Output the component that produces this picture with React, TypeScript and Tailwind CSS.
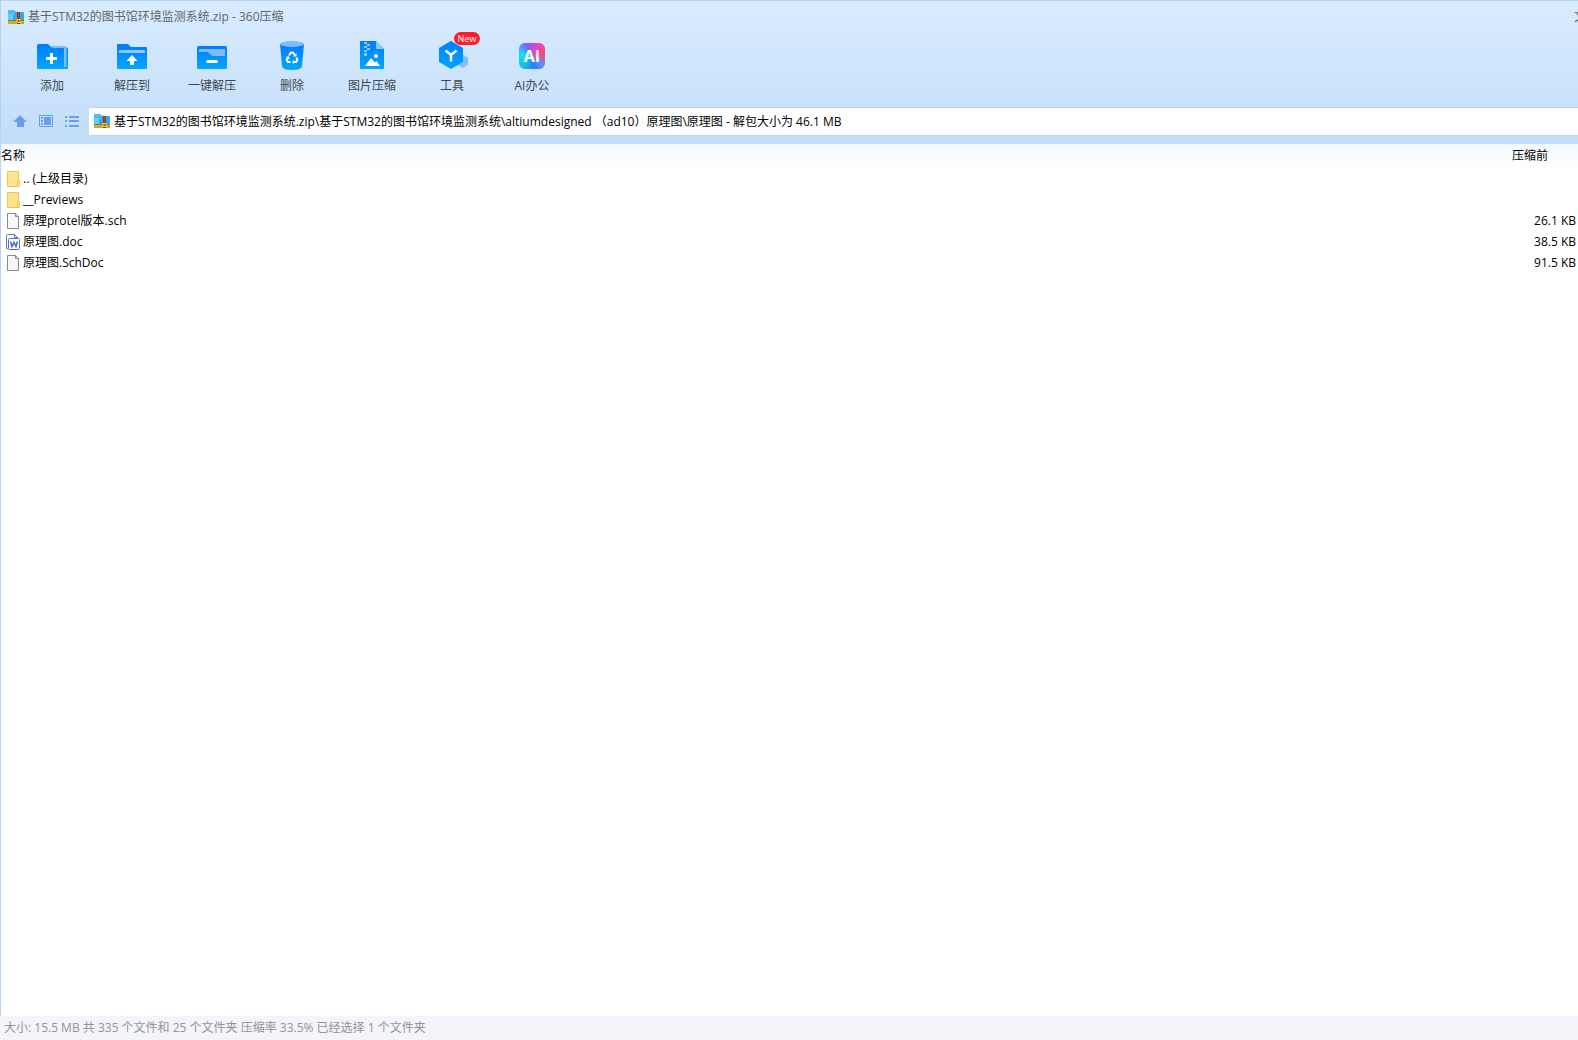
import type { ReactNode } from "react";

interface ToolButtonProps {
  label: string;
  icon: ReactNode;
  badge?: string;
}

interface FileRow {
  name: string;
  kind: "folder" | "file" | "doc";
  size?: string;
}

const files: FileRow[] = [
  { name: ".. (上级目录)", kind: "folder" },
  { name: "__Previews", kind: "folder" },
  { name: "原理protel版本.sch", kind: "file", size: "26.1 KB" },
  { name: "原理图.doc", kind: "doc", size: "38.5 KB" },
  { name: "原理图.SchDoc", kind: "file", size: "91.5 KB" },
];

const ZipIcon = () => (
  <svg width="16" height="16" viewBox="0 0 16 16" className="shrink-0" aria-hidden="true">
    <path d="M0 2q0-1 1-1h5l1.500 1.500H9V11H0Z" fill="#4cb8f5" />
    <path d="M7 3h8q1 0 1 1v7H0V6h6Z" fill="#3ba5ea" />
    <path d="M0 5h6l-1 2v4H0Z" fill="#62cbfa" />
    <path d="M0 11h16v1H0Z" fill="#4d9a3a" />
    <path d="M0 12h16v2H0Z" fill="#f79a1c" />
    <path d="M0 14h16v1H0Z" fill="#8cc63f" />
    <path d="M9 3h3v12H9Z" fill="#8a3f10" />
    <path d="M10 4h1v1h-1ZM10 6h1v1h-1ZM10 8h1v1h-1Z" fill="#b8702c" />
    <path d="M9 10.500h3v3H9Z" fill="#9a4a10" stroke="#ffd860" />
  </svg>
);

const Gradient = ({ id }: { id: string }) => (
  <linearGradient id={id} x1="0" y1="0" x2="0" y2="1">
    <stop offset="0" stopColor="#007bff" />
    <stop offset="1" stopColor="#00a8ff" />
  </linearGradient>
);

const AddIcon = () => (
  <svg width="32" height="32" viewBox="0 0 32 32">
    <Gradient id="add" />
    <path d="M1 5.500Q1 4 2.500 4H12l3 3h14q3 0 3 3v18q0 1-1 1H2q-1 0-1-1Z" fill="url(#add)" />
    <path d="M14 6h15q1.500 0 1.500 1.500V27H28V8H16Z" fill="#7ebeff" />
    <path d="M15.500 13v11M10 18.500h11" stroke="#fff" strokeWidth="3" />
  </svg>
);

const ExtractIcon = () => (
  <svg width="32" height="32" viewBox="0 0 32 32">
    <Gradient id="extract" />
    <path d="M1 5q0-1 1-1h10l3 3h15q1 0 1 1v20q0 1-1 1H2q-1 0-1-1Z" fill="url(#extract)" />
    <path d="M3 13v-2q0-1 1-1h24q1 0 1 1v2Z" fill="#8dc8ff" />
    <path d="M16 15l5.500 6H18v4h-4v-4h-3.500Z" fill="#fff" />
  </svg>
);

const OneKeyIcon = () => (
  <svg width="32" height="32" viewBox="0 0 32 32">
    <Gradient id="onekey" />
    <rect x="1" y="6" width="30" height="23" rx="1.500" fill="url(#onekey)" />
    <path d="M3 10q0-1 1-1h24q1 0 1 1v6H16l-4-4H3Z" fill="#7ebeff" />
    <path d="M11.500 21.500h9" stroke="#fff" strokeWidth="3" strokeLinecap="round" />
  </svg>
);

const DeleteIcon = () => (
  <svg width="32" height="32" viewBox="0 0 32 32">
    <Gradient id="delete" />
    <path d="M4 4h24l-2 22q-.3 4-10 4T6 26Z" fill="url(#delete)" />
    <ellipse cx="16" cy="4" rx="12" ry="3" fill="#7ebeff" />
    <g fill="none" stroke="#fff" strokeWidth="2">
      <path d="M13 15.500l1.800-2.700h2.400l1.600 2.500" />
      <path d="M20.200 17.500l1.200 2.200-1.300 2.300h-2.600" />
      <path d="M14.500 22h-2.600l-1.300-2.300 1.200-2.300" />
    </g>
    <path d="M20.500 13v3.500h-3.500ZM18 19.800v4.400L15.800 22ZM9.500 17l3.500-.8.800 3.500Z" fill="#fff" />
  </svg>
);

const ImageIcon = () => (
  <svg width="32" height="32" viewBox="0 0 32 32">
    <Gradient id="image" />
    <path d="M4 2q0-1 1-1h15l8 8v19q0 1-1 1H5q-1 0-1-1Z" fill="url(#image)" />
    <path d="M20 1l8 8h-7q-1 0-1-1Z" fill="#8dc8ff" />
    <path d="M8 2h3v2H8ZM11 4h3v2h-3ZM8 6h3v2H8ZM11 8h3v2h-3ZM8 10h3v2H8ZM8 13h3v3H8Z" fill="#8dc8ff" />
    <circle cx="20" cy="16" r="2" fill="#fff" />
    <path d="M9 26l6-8 4 4.500 1.500-1.500L24 26Z" fill="#fff" />
  </svg>
);

const ToolsIcon = () => (
  <svg width="32" height="32" viewBox="0 0 32 32">
    <Gradient id="tools" />
    <path d="M27 15l5 2.500v7L27 28l-5-3Z" fill="#7ebeff" />
    <path d="M15 1l12 7v14l-12 7-12-7V8Z" fill="url(#tools)" />
    <path d="M9.500 10.500L15 15l5.500-4.500M15 15v6.500" fill="none" stroke="#fff" strokeWidth="2.500" />
  </svg>
);

const AiIcon = () => (
  <span className="flex h-[26px] w-[26px] items-center justify-center rounded-md bg-[conic-gradient(from_20deg,#e83fd0,#ff4a6a_60deg,#5a8cff_110deg,#2a7bff_150deg,#18c8e8_210deg,#1cdff0_260deg,#6a6cff_310deg,#e83fd0)] text-base font-bold text-white">
    AI
  </span>
);

const ToolButton = ({ label, icon, badge }: ToolButtonProps) => (
  <button type="button" className="relative flex w-20 flex-col items-center text-[#3f4750]">
    <span className="flex h-8 items-center" aria-hidden="true">
      {icon}
    </span>
    <span className="mt-1 h-5 leading-5">{label}</span>
    {badge && (
      <span className="absolute -top-2 left-[42px] flex h-[13px] w-[26px] items-center justify-center rounded-full bg-[#fa1e2d] text-[9px] text-white">
        {badge}
      </span>
    )}
  </button>
);

const FileIcon = ({ kind }: { kind: FileRow["kind"] }) => {
  if (kind === "folder") {
    return (
      <svg width="16" height="16" viewBox="0 0 16 16" className="shrink-0" aria-hidden="true">
        <path d="M1.500.5h11v9h1v6h-12Z" fill="#ffe391" stroke="#eec750" />
        <path d="M11.500 15v-4.500q0-1 1-1t1 1V15" fill="#ffe391" stroke="#eec750" />
      </svg>
    );
  }
  if (kind === "doc") {
    return (
      <svg width="16" height="16" viewBox="0 0 16 16" className="shrink-0" aria-hidden="true">
        <path d="M.5 1.500q0-1 1-1h7l3 3v11H.5Z" fill="#f8f8f8" stroke="#7f7f7f" />
        <path d="M8.500.5v3h3" fill="none" stroke="#7f7f7f" />
        <rect x="2.500" y="4.500" width="11" height="11" rx="1" fill="#fff" stroke="#4b6df0" />
        <path d="M4.500 7.500l1.500 5 2-4 2 4 1.500-5" fill="none" stroke="#3c63ee" strokeWidth="1.500" />
      </svg>
    );
  }
  return (
    <svg width="16" height="16" viewBox="0 0 16 16" className="shrink-0" aria-hidden="true">
      <path d="M1.500.5h8l3 3v12h-11Z" fill="#f8f8f8" stroke="#8b8b8b" />
      <path d="M9.500.5v3h3" fill="none" stroke="#8b8b8b" />
    </svg>
  );
};

const AddressBar = () => (
  <div className="flex h-9 items-center pl-3">
    <div className="flex gap-[10px] pr-2 text-[#699fea]">
      <button type="button" aria-label="向上" className="h-4 w-4">
        <svg width="16" height="16" viewBox="0 0 16 16" fill="currentColor">
          <path d="M7 2l7 7h-3v5H4V9H0Z" />
        </svg>
      </button>
      <button type="button" aria-label="预览" className="h-4 w-4">
        <svg width="16" height="16" viewBox="0 0 16 16" fill="none" stroke="currentColor">
          <path d="M.5 2.500h13v11H.5Z" />
          <path d="M2 5h2M2 8h2M2 11h2" strokeWidth="2" />
          <path d="M5 4h7v8H5Z" fill="currentColor" stroke="none" />
        </svg>
      </button>
      <button type="button" aria-label="列表" className="h-4 w-4">
        <svg width="16" height="16" viewBox="0 0 16 16" stroke="currentColor" strokeWidth="2">
          <path d="M0 4h2M0 8h2M0 13h2M4 4h10M4 8h10M4 13h10" />
        </svg>
      </button>
    </div>
    <label className="flex h-[29px] flex-1 items-center gap-1 border-y border-[#b9d6f2] bg-white pl-[5px]">
      <ZipIcon />
      <input
        type="text"
        aria-label="路径"
        className="h-5 min-w-0 flex-1 text-black outline-none"
        defaultValue="基于STM32的图书馆环境监测系统.zip\基于STM32的图书馆环境监测系统\altiumdesigned （ad10）原理图\原理图 - 解包大小为 46.1 MB"
      />
    </label>
  </div>
);

const App = () => {
  return (
    <div className="flex min-h-screen flex-col bg-white font-['Open_Sans','Noto_Sans_CJK_SC',sans-serif] text-xs text-black">
      <header className="border-t border-l border-[#b4d3f2] bg-linear-to-b from-[#d9ecff] to-[#c2ddf8]">
        <div className="flex h-8 items-center justify-between pl-[7px] text-[#5f666e]">
          <h1 className="flex items-center gap-1">
            <ZipIcon />
            基于STM32的图书馆环境监测系统.zip - 360压缩
          </h1>
          <button type="button" className="w-1 overflow-hidden whitespace-nowrap">
            文件
          </button>
        </div>
        <nav className="flex h-[70px] pt-[7px] pl-[11px]">
          <ToolButton label="添加" icon={<AddIcon />} />
          <ToolButton label="解压到" icon={<ExtractIcon />} />
          <ToolButton label="一键解压" icon={<OneKeyIcon />} />
          <ToolButton label="删除" icon={<DeleteIcon />} />
          <ToolButton label="图片压缩" icon={<ImageIcon />} />
          <ToolButton label="工具" icon={<ToolsIcon />} badge="New" />
          <ToolButton label="AI办公" icon={<AiIcon />} />
        </nav>
        <AddressBar />
        <div className="h-[5px]" />
      </header>

      <main className="flex-1 border-l border-[#b4d3f2]">
        <table className="w-full table-fixed border-collapse">
          <thead>
            <tr className="h-6 bg-linear-to-b from-[#f3f8ff] to-white">
              <th className="p-0 text-left font-normal">名称</th>
              <th className="w-[66px] p-0 text-left font-normal">压缩前</th>
            </tr>
          </thead>
          <tbody>
            {files.map((file) => (
              <tr key={file.name} className="h-[21px]">
                <td className="p-0 pl-[5px]">
                  <div className="flex h-[21px] items-center gap-px">
                    <FileIcon kind={file.kind} />
                    {file.name}
                  </div>
                </td>
                <td className="p-0 pr-[2px] text-right">{file.size}</td>
              </tr>
            ))}
          </tbody>
        </table>
      </main>

      <footer className="flex h-6 items-center bg-[#f3f5fa] pl-1 text-[#939393]">
        大小: 15.5 MB 共 335 个文件和 25 个文件夹 压缩率 33.5% 已经选择 1 个文件夹
      </footer>
    </div>
  );
};

export default App;
